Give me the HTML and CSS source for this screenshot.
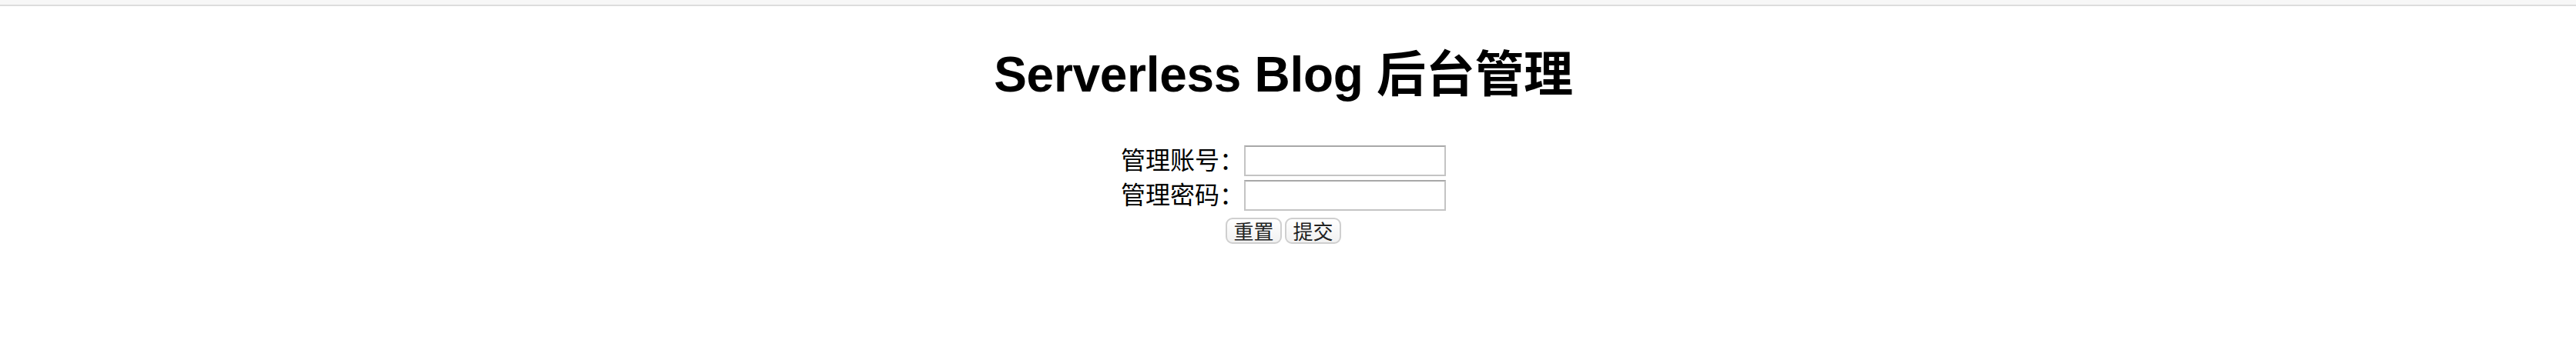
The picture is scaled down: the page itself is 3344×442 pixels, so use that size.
FILE: index.html
```html
<!DOCTYPE html>
<html lang="zh-CN">
<head>
<meta charset="utf-8">
<title>Serverless Blog 后台管理</title>
<link rel="stylesheet" href="styles.css">
</head>
<body>
<div class="topbar"></div>
<main class="page">
  <h1 class="title">Serverless Blog 后台管理</h1>
  <form class="login">
    <div class="row">
      <label class="label" for="user">管理账号：</label>
      <input class="field" id="user" type="text">
    </div>
    <div class="row">
      <label class="label" for="pass">管理密码：</label>
      <input class="field" id="pass" type="password">
    </div>
    <div class="actions">
      <button class="btn" type="reset">重置</button>
      <button class="btn" type="submit">提交</button>
    </div>
  </form>
</main>
</body>
</html>
```
FILE: styles.css
```css
html, body {
  margin: 0;
  padding: 0;
  background: #ffffff;
}
body {
  font-family: "Liberation Sans", "Noto Sans CJK SC", sans-serif;
  color: #000;
}
.topbar {
  height: 6px;
  background: #f7f7f7;
  border-bottom: 2px solid #dcdcdc;
}
.page {
  padding-right: 12px;
  display: flex;
  flex-direction: column;
  align-items: center;
}
.title {
  margin: 52px 0 0;
  font-size: 64px;
  line-height: 74px;
  font-weight: bold;
  letter-spacing: -0.3px;
  font-family: "Liberation Sans", "Noto Sans CJK SC", sans-serif;
}
.login {
  margin-top: 55px;
  display: flex;
  flex-direction: column;
  align-items: center;
  gap: 5px;
}
.row {
  display: flex;
  align-items: flex-start;
}
.label {
  font-family: "Noto Sans CJK SC", sans-serif;
  font-size: 32px;
  line-height: 34px;
  width: 160px;
  white-space: nowrap;
}
.field {
  box-sizing: border-box;
  width: 262px;
  height: 40px;
  margin: 0;
  padding: 0 4px;
  border: 2px solid #c4c4c4;
  border-top-color: #a8a8a8;
  background: #fff;
  font-size: 26px;
  outline: none;
}
.actions {
  margin-top: 4px;
  display: flex;
  gap: 4px;
}
.btn {
  box-sizing: border-box;
  width: 73px;
  height: 34px;
  margin: 0;
  padding: 0;
  border: 2px solid #cfcfcf;
  border-radius: 9px;
  background: linear-gradient(#ffffff, #f1f1f1);
  font-family: "Noto Sans CJK SC", sans-serif;
  font-size: 26px;
  line-height: 28px;
  color: #222;
}
```
